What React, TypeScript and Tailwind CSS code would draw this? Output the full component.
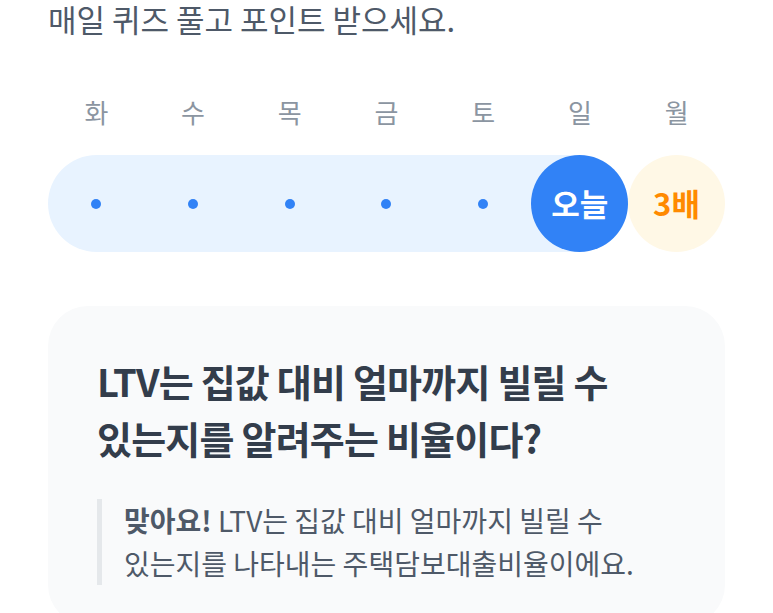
import React from 'react';

const days = ['화', '수', '목', '금', '토', '일', '월'];

export default function App() {
  return (
    <div
      className="w-[773px] h-[613px] overflow-hidden bg-white px-12 break-keep"
      style={{ fontFamily: '"Noto Sans CJK KR", "Noto Sans", sans-serif' }}
    >
      {/* Header */}
      <p className="text-[31px] leading-[40px] text-[#4e5968] -mt-[1px]">
        매일 퀴즈 풀고 포인트 받으세요.
      </p>

      {/* Week labels */}
      <div className="grid grid-cols-7 mt-[53px] h-[40px] items-center">
        {days.map(d => (
          <span key={d} className="text-center text-[26px] leading-[40px] text-[#8b95a1]">
            {d}
          </span>
        ))}
      </div>

      {/* Streak bar */}
      <div className="flex mt-[23px] h-[97px]">
        <div className="flex-[6] grid grid-cols-6 items-center bg-[#e8f3ff] rounded-full">
          {[0, 1, 2, 3, 4].map(i => (
            <div key={i} className="flex justify-center">
              <span className="w-[10px] h-[10px] rounded-full bg-[#3182f6]" />
            </div>
          ))}
          <div className="flex justify-center">
            <div className="w-[97px] h-[97px] rounded-full bg-[#3182f6] flex items-center justify-center">
              <span className="text-white font-bold text-[31px]">오늘</span>
            </div>
          </div>
        </div>
        <div className="flex-1 flex justify-center">
          <div className="w-[97px] h-[97px] rounded-full bg-[#fff8e6] flex items-center justify-center">
            <span className="text-[#ff8a00] font-bold text-[31px]">3배</span>
          </div>
        </div>
      </div>

      {/* Quiz card */}
      <div className="mt-[54px] bg-[#f9fafb] rounded-[40px] pt-[46px] px-[49px] pb-[40px]">
        <h2 className="text-[38px] leading-[57px] font-bold text-[#333d4b] tracking-[-0.8px]">
          LTV는 집값 대비 얼마까지 빌릴 수 있는지를 알려주는 비율이다?
        </h2>
        <div className="mt-[33px] border-l-[5px] border-[#e5e8eb] pl-[22px]">
          <p className="text-[28px] leading-[43px] text-[#4e5968]">
            <b className="font-bold">맞아요!</b> LTV는 집값 대비 얼마까지 빌릴 수 있는지를 나타내는 주택담보대출비율이에요.
          </p>
        </div>
      </div>
    </div>
  );
}
